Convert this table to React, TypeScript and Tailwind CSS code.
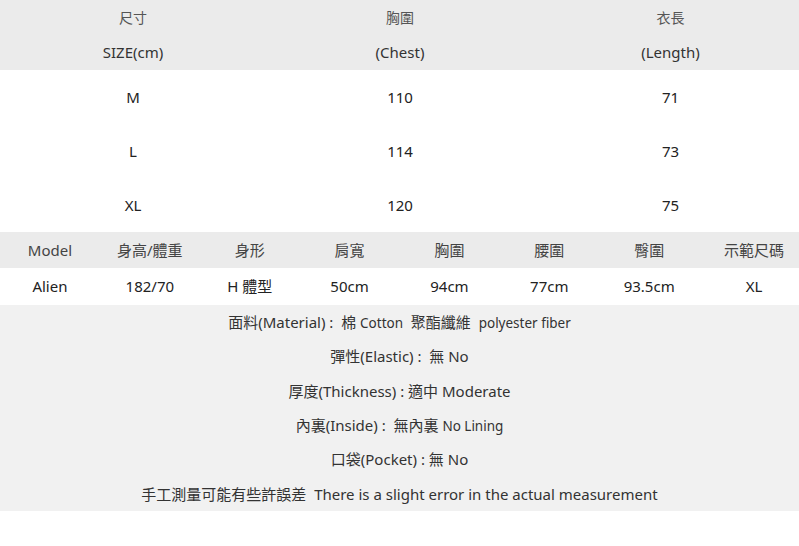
const font = { fontFamily: '"Noto Sans", "Noto Sans CJK TC", sans-serif' };

const sizes = [
  ["M", "110", "71"],
  ["L", "114", "73"],
  ["XL", "120", "75"],
];

const modelHead = ["Model", "身高/體重", "身形", "肩寬", "胸圍", "腰圍", "臀圍", "示範尺碼"];
const modelRow = ["Alien", "182/70", "H 體型", "50cm", "94cm", "77cm", "93.5cm", "XL"];

export default function App() {
  return (
    <div className="w-[799px] h-[546px] bg-white text-[#222]" style={font}>
      {/* size header */}
      <div className="h-[70px] bg-[#ebebeb] grid grid-cols-[266px_268px_1fr] grid-rows-2 text-center items-center">
        <div className="text-[14px] text-[#555]">尺寸</div>
        <div className="text-[14px] text-[#555]">胸圍</div>
        <div className="text-[14px] text-[#555] pl-2">衣長</div>
        <div className="text-[15px] text-[#333]">SIZE(cm)</div>
        <div className="text-[15px] text-[#333]">(Chest)</div>
        <div className="text-[15px] text-[#333] pl-2">(Length)</div>
      </div>

      {/* size rows */}
      {sizes.map((r) => (
        <div key={r[0]} className="h-[54px] grid grid-cols-[266px_268px_1fr] text-center items-center text-[15px]">
          <div>{r[0]}</div>
          <div>{r[1]}</div>
          <div className="pl-2">{r[2]}</div>
        </div>
      ))}

      {/* model */}
      <div className="h-[36px] bg-[#ebebeb] grid grid-cols-8 text-center items-center text-[15px] text-[#444]">
        {modelHead.map((c, i) => (
          <div key={c} className={i === 7 ? "pl-[10px]" : ""}>
            {c}
          </div>
        ))}
      </div>
      <div className="h-[37px] grid grid-cols-8 text-center items-center text-[15px]">
        {modelRow.map((c, i) => (
          <div key={i} className={i === 7 ? "pl-[10px]" : ""}>
            {c}
          </div>
        ))}
      </div>

      {/* details */}
      <div className="h-[206px] bg-[#f1f1f1] grid grid-rows-6 items-center text-center text-[15px] text-[#333]">
        <p>
          面料(Material) :&nbsp; 棉 <span className="text-[13.5px]">Cotton</span>&nbsp;&nbsp;聚酯纖維&nbsp;&nbsp;
          <span className="text-[13.5px]">polyester fiber</span>
        </p>
        <p>彈性(Elastic) :&nbsp; 無 No</p>
        <p>厚度(Thickness) : 適中 Moderate</p>
        <p>
          內裏(Inside) :&nbsp; 無內裏 <span className="text-[13.5px]">No Lining</span>
        </p>
        <p>口袋(Pocket) : 無 No</p>
        <p>手工測量可能有些許誤差&nbsp;&nbsp;There is a slight error in the actual measurement</p>
      </div>
    </div>
  );
}
